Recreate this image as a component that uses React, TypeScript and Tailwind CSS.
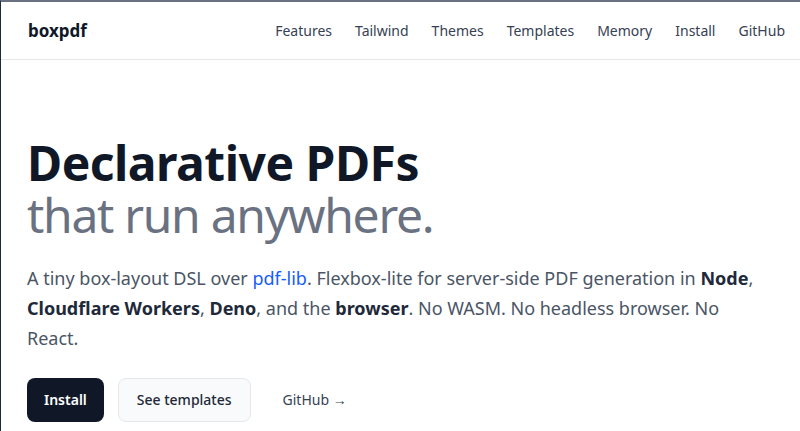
const navLinks = ['Features', 'Tailwind', 'Themes', 'Templates', 'Memory', 'Install', 'GitHub']

function Header() {
  return (
    <header className="flex h-[58px] items-center justify-between border-b border-gray-200 pl-[27px] pr-[15px]">
      <a href="#" className="text-[17px] font-bold text-gray-900">boxpdf</a>
      <nav className="flex items-center gap-[23px] text-[14px] text-gray-700">
        {navLinks.map((l) => (
          <a key={l} href="#">{l}</a>
        ))}
      </nav>
    </header>
  )
}

export default function App() {
  return (
    <div
      className="min-h-[431px] border-t-2 border-l border-t-gray-500 border-l-gray-800 bg-white"
      style={{ fontFamily: '"Noto Sans", "Open Sans", sans-serif' }}
    >
      <Header />
      <main className="px-[26px] pt-[77px]">
        <h1 className="text-[48px] font-bold leading-[52px] tracking-[-0.5px] text-gray-900">
          Declarative PDFs
          <br />
          <span className="font-normal tracking-[-1.3px] text-gray-500">that run anywhere.</span>
        </h1>
        <p className="mt-[22px] max-w-[740px] text-[18px] leading-[30px] text-gray-600">
          A tiny box-layout DSL over <a href="#" className="text-blue-600">pdf-lib</a>. Flexbox-lite for server-side PDF generation in{' '}
          <b className="text-gray-800">Node</b>, <b className="text-gray-800">Cloudflare Workers</b>,{' '}
          <b className="text-gray-800">Deno</b>, and the <b className="text-gray-800">browser</b>. No WASM. No headless browser. No React.
        </p>
        <div className="mt-[25px] flex items-center gap-[14px]">
          <a href="#" className="rounded-lg bg-gray-900 px-[17px] py-[11px] text-[14px] leading-[22px] font-semibold text-white">Install</a>
          <a href="#" className="rounded-lg border border-gray-200 bg-gray-50 px-[18px] py-[10px] text-[14px] leading-[22px] font-medium text-gray-800">See templates</a>
          <a href="#" className="px-[18px] py-[11px] text-[14px] leading-[22px] text-gray-700">GitHub →</a>
        </div>
      </main>
    </div>
  )
}
